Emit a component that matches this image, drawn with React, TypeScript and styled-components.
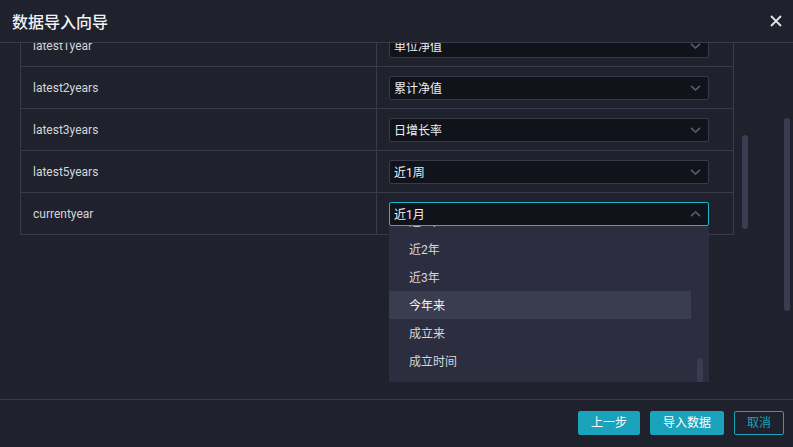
import React from "react";
import styled, { createGlobalStyle } from "styled-components";

const GlobalStyle = createGlobalStyle`
  html, body {
    margin: 0;
    padding: 0;
    background: #1f212c;
  }
  body {
    font-family: Roboto, "Noto Sans CJK SC", sans-serif;
  }
  * {
    box-sizing: border-box;
  }
`;

const Modal = styled.div`
  width: 793px;
  height: 447px;
  display: flex;
  flex-direction: column;
  background: #1f212c;
  color: #d4d6de;
`;

const Header = styled.div`
  height: 43px;
  flex-shrink: 0;
  display: flex;
  align-items: center;
  justify-content: space-between;
  padding: 0 11px 0 12px;
  border-bottom: 1px solid #393b4b;
`;

const Title = styled.h1`
  margin: 0;
  font-size: 16px;
  font-weight: 500;
  color: #f2f2f4;
  letter-spacing: 0;
`;

const CloseButton = styled.button`
  width: 12px;
  height: 12px;
  padding: 0;
  border: 0;
  background: none;
  display: flex;
  cursor: pointer;
`;

const Body = styled.div`
  flex: 1;
  position: relative;
  overflow: hidden;
  padding: 0 20px;
`;

const Table = styled.div`
  width: 714px;
  margin-top: -19px;
  border: 1px solid #393b4b;
`;

const Row = styled.div<{ $last?: boolean }>`
  display: grid;
  grid-template-columns: 356px 1fr;
  height: ${(p) => (p.$last ? "41px" : "42px")};
  border-bottom: ${(p) => (p.$last ? "none" : "1px solid #393b4b")};
`;

const LabelCell = styled.div`
  display: flex;
  align-items: center;
  padding-left: 12px;
  border-right: 1px solid #393b4b;
  font-size: 12px;
  color: #d4d6de;
`;

const SelectCell = styled.div`
  display: flex;
  align-items: center;
  padding-left: 12px;
`;

const SelectWrap = styled.div`
  position: relative;
  width: 320px;
`;

const SelectBox = styled.div<{ $open?: boolean }>`
  height: 24px;
  display: flex;
  align-items: center;
  justify-content: space-between;
  padding: 0 7px 0 4px;
  background: #11131b;
  border: 1px solid ${(p) => (p.$open ? "#1bb6d2" : "#393b4b")};
  border-radius: 2px;
  font-size: 12px;
  color: #eeeff2;
`;

const Menu = styled.div`
  position: absolute;
  top: 100%;
  left: 0;
  width: 320px;
  height: 156px;
  overflow: hidden;
  background: #2c2e3f;
  z-index: 2;
`;

const MenuList = styled.ul`
  list-style: none;
  margin: -19px 0 0;
  padding: 0 18px 0 0;
`;

const MenuItem = styled.li<{ $hover?: boolean }>`
  height: 28px;
  display: flex;
  align-items: center;
  padding-left: 20px;
  font-size: 12px;
  color: ${(p) => (p.$hover ? "#f4f5f7" : "#d4d6de")};
  background: ${(p) => (p.$hover ? "#3a3c4f" : "transparent")};
`;

const Thumb = styled.div<{ $top: number; $height: number; $left?: number; $right?: number }>`
  position: absolute;
  top: ${(p) => p.$top}px;
  ${(p) => (p.$left !== undefined ? `left: ${p.$left}px;` : "")}
  ${(p) => (p.$right !== undefined ? `right: ${p.$right}px;` : "")}
  width: 6px;
  height: ${(p) => p.$height}px;
  border-radius: 3px;
  background: #3a3d51;
`;

const Footer = styled.div`
  height: 48px;
  flex-shrink: 0;
  display: flex;
  align-items: center;
  justify-content: flex-end;
  gap: 10px;
  padding: 0 9px 1px 0;
  border-top: 1px solid #393b4b;
`;

const Button = styled.button<{ $outline?: boolean }>`
  height: 24px;
  padding: 0 12px;
  border-radius: 2px;
  border: 1px solid #1ba3bb;
  background: ${(p) => (p.$outline ? "transparent" : "#1ba3bb")};
  color: ${(p) => (p.$outline ? "#1ba3bb" : "#ffffff")};
  font-family: Roboto, "Noto Sans CJK SC", sans-serif;
  font-size: 12px;
  line-height: 22px;
  cursor: pointer;
`;

const Chevron = ({ up }: { up?: boolean }) => (
  <svg width="11" height="6" viewBox="0 0 11 6">
    <polyline
      points={up ? "1,5.2 5.5,1 10,5.2" : "1,0.8 5.5,5 10,0.8"}
      fill="none"
      stroke="#5a5d72"
      strokeWidth="1.6"
    />
  </svg>
);

const rows = [
  { field: "latest1year", value: "单位净值" },
  { field: "latest2years", value: "累计净值" },
  { field: "latest3years", value: "日增长率" },
  { field: "latest5years", value: "近1周" },
  { field: "currentyear", value: "近1月", open: true },
];

const options = ["近1年", "近2年", "近3年", "今年来", "成立来", "成立时间"];

export default function App() {
  return (
    <>
      <GlobalStyle />
      <Modal>
        <Header>
          <Title>数据导入向导</Title>
          <CloseButton aria-label="close">
            <svg width="12" height="12" viewBox="0 0 12 12">
              <path d="M1 1 L11 11 M11 1 L1 11" stroke="#e4e5ea" strokeWidth="1.8" />
            </svg>
          </CloseButton>
        </Header>
        <Body>
          <Table>
            {rows.map((r, i) => (
              <Row key={r.field} $last={i === rows.length - 1}>
                <LabelCell>{r.field}</LabelCell>
                <SelectCell>
                  <SelectWrap>
                    <SelectBox $open={r.open}>
                      <span>{r.value}</span>
                      <Chevron up={r.open} />
                    </SelectBox>
                    {r.open && (
                      <Menu>
                        <MenuList>
                          {options.map((o) => (
                            <MenuItem key={o} $hover={o === "今年来"}>
                              {o}
                            </MenuItem>
                          ))}
                        </MenuList>
                        <Thumb $top={132} $height={40} $right={6} />
                      </Menu>
                    )}
                  </SelectWrap>
                </SelectCell>
              </Row>
            ))}
          </Table>
          <Thumb $top={92} $height={94} $left={742} />
          <Thumb $top={75} $height={193} $right={3} />
        </Body>
        <Footer>
          <Button>上一步</Button>
          <Button>导入数据</Button>
          <Button $outline>取消</Button>
        </Footer>
      </Modal>
    </>
  );
}
